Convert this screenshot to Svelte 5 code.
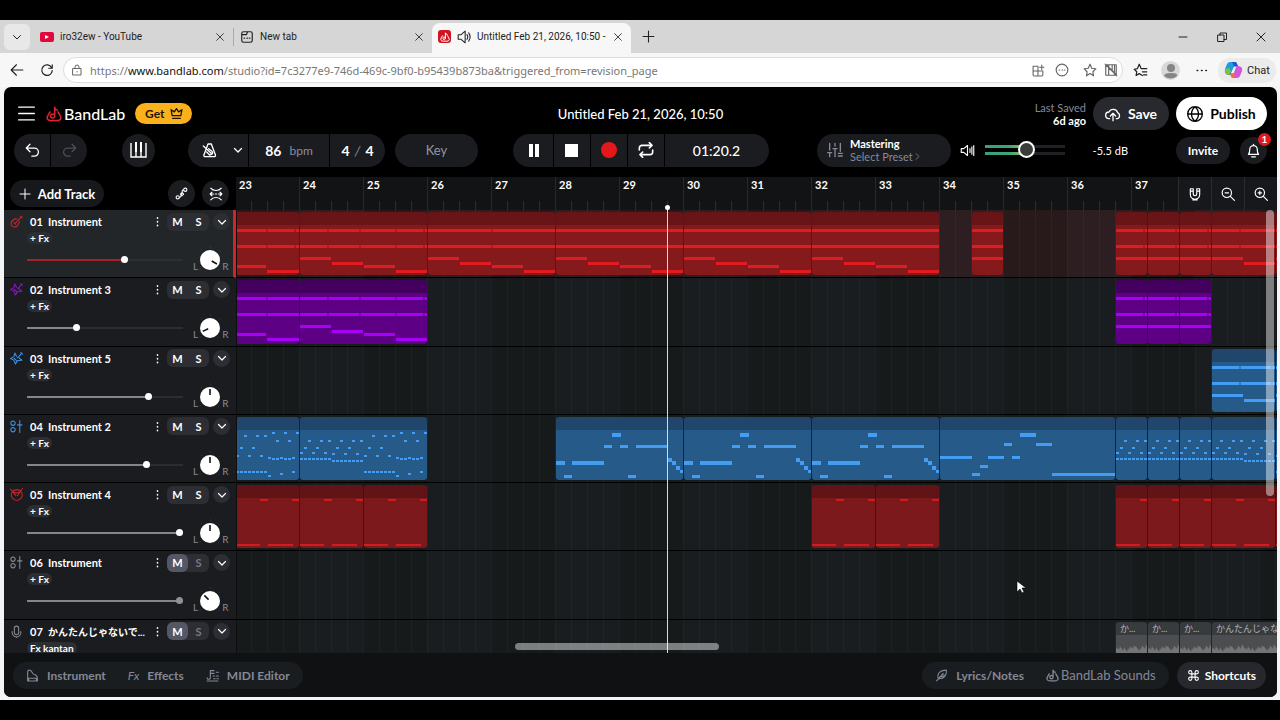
<script>
	const BAR = 64;
	const FIRST_BAR = 23;

	const bars = Array.from({ length: 15 }, (_, i) => FIRST_BAR + i);

	const icons = {
		chevron: 'M5 9l7 7 7-7',
		right: 'M8 4l8 8-8 8',
		close: 'M4 4l16 16M20 4L4 20',
		plus: 'M12 2v20M2 12h20',
		minus: 'M4 12h16',
		windows: 'M4 8h12v13H4zM8 8V4h13v13h-5',
		back: 'M22 12H2M11 3l-9 9 9 9',
		reload: 'M20 8a9 9 0 1 0 1 5M21 3v6h-6',
		lock: 'M4 9h16v13H4zM8 9V6a4 4 0 0 1 8 0v3M12 15v1',
		page: 'M3 6a3 3 0 0 1 3-3h12a3 3 0 0 1 3 3v12a3 3 0 0 1-3 3H6a3 3 0 0 1-3-3zM3 8h8l2-5M7 14h1M12 14h1M16 14h1',
		speaker: 'M2 8h5l7-6v20l-7-6H2zM17 8q3 4 0 8M20 5q5 7 0 14',
		apps: 'M2 4h9v18H4a2 2 0 0 1-2-2zM2 13h18v7a2 2 0 0 1-2 2h-7M18 2v8M14 6h8',
		bubble: 'M12 2a10 10 0 1 0 0 20 10 10 0 0 0 0-20M7 12h1M12 12h1M16 12h1',
		star: 'M12 2l3 7 7 1-5 5 1 7-6-4-6 4 1-7-5-5 7-1z',
		keysOff: 'M3 3h18v18H3zM8 3v18M14 3v9M18 3v18M2 2l20 20M4 3l17 17',
		starList: 'M15 20l-5-3-5 3 1-6-4-4 5-1 3-7 3 7h9M15 14h7M17 19h5',
		dots: 'M4 12h1M12 12h1M20 12h1',
		more: 'M12 4v1M12 12v1M12 20v1',
		menu: 'M1 3h22M1 12h22M1 21h22',
		crown: 'M4 16L2 5l6 4 4-6 4 6 6-4-2 11zM5 21h14',
		cloud: 'M7 19H6a5 5 0 0 1 0-10 7 7 0 0 1 13 1 5 5 0 0 1 0 9h-2M12 22V11M8 15l4-4 4 4',
		globe: 'M12 1a11 11 0 1 0 0 22 11 11 0 0 0 0-22M12 1c-7 6-7 16 0 22M12 1c7 6 7 16 0 22M1 12h22',
		undo: 'M8 2L2 8l6 6M2 8h13a6 6 0 0 1 0 13h-4',
		redo: 'M16 2l6 6-6 6M22 8H9a6 6 0 0 0 0 13h4',
		metronome: 'M9 3h5l6 16a2 2 0 0 1-2 3H5a2 2 0 0 1-2-3zM2 6l13 12M7 15l3 3a3 3 0 0 0 5-4l-5-4',
		loop: 'M2 12V9a4 4 0 0 1 4-4h15M17 1l4 4-4 4M22 12v3a4 4 0 0 1-4 4H3M7 15l-4 4 4 4',
		mixer: 'M4 2v10M1 16h6M4 16v6M12 2v4M9 10h6M12 10v12M20 2v12M17 17h6M17 21h6',
		volume: 'M2 9h4l6-5v16l-6-5H2zM16 9v6M19 6v12M22 4v16',
		bell: 'M4 18c2-2 2-4 2-8a6 6 0 0 1 12 0c0 4 0 6 2 8zM9 22h6M12 2v2',
		automation: 'M2 19a3 3 0 1 0 6 0 3 3 0 0 0-6 0M16 5a3 3 0 1 0 6 0 3 3 0 0 0-6 0M8 19c6 0 1-8 5-8M16 5c-5 0-1 7-4 8M13 10l3 3-3 3-3-3z',
		fit: 'M3 2q3 4 9 4t9-4M3 22q3-4 9-4t9 4M2 12h6M11 12h2M16 12h6M5 9l-3 3 3 3M19 9l3 3-3 3',
		magnet: 'M4 3h5v9a3 3 0 0 0 6 0V3h5v10a8 8 0 0 1-16 0zM4 7h5M15 7h5M8 22h8',
		zoomOut: 'M10 2a8 8 0 1 0 0 16 8 8 0 0 0 0-16M7 10h6M16 16l7 7',
		zoomIn: 'M10 2a8 8 0 1 0 0 16 8 8 0 0 0 0-16M7 10h6M10 7v6M16 16l7 7',
		guitar: 'M22 3l-8 8M19 2l3 3M12 7c-3-1-4 1-5 2-3 1-5 2-5 6s3 7 7 7 5-2 6-5c1-1 3-2 2-5M16 8l-6 7M7 14l3 3',
		electric: 'M22 2l-8 9M20 1l3 3M12 8L9 2 7 9l-6 3 6 3 3 7 4-6 8-1-5-4M8 12l4 4',
		machine: 'M5 2a4 4 0 1 0 1 0zM5 14a4 4 0 1 0 1 0zM18 1v22M14 9h8',
		drum: 'M12 3a10 10 0 1 0 1 0zM5 6c2 4 12 4 14 0M1 2l10 12M23 1l-7 10M14 14l2-4',
		mic: 'M8 6a4 4 0 0 1 8 0v8a4 4 0 0 1-8 0zM4 12v2a8 8 0 0 0 16 0v-2M12 22v2',
		piano: 'M3 22V5a3 3 0 0 1 3-3c6 0 5 8 9 8 4 1 6 3 6 7v5M3 17h18M5 17v5M19 17v5M3 22h18',
		midi: 'M2 16a3 3 0 1 0 6 0V3h7M8 8h7M2 22h20M19 6h4M13 13h3M19 13h4M14 18h3M20 18h3',
		quill: 'M3 22L15 8M6 18C3 8 10 2 21 2c1 10-4 17-15 16M9 14h7M12 11h6',
		command: 'M9 9V6a3 3 0 1 0-3 3h12a3 3 0 1 0-3-3v12a3 3 0 1 0 3-3H6a3 3 0 1 0 3 3z'
	};

	// notes are [x, y, width, height] inside a clip
	const steps = [
		[0, 45, 31, 3],
		[32, 50, 31, 3],
		[64, 53, 31, 3],
		[96, 58, 31, 3]
	];

	function chord(width) {
		return [[0, 17, width, 3], [0, 33, width, 3]];
	}

	function dots(rows, offset = 0) {
		return rows.map((y, i) => [offset + i * 4, y, 3, 2]);
	}

	const arpOne = [...dots([35, 30, 23, 35, 30, 23, 35, 23]), ...dots(Array(8).fill(41))];
	const arpTwo = [...dots([36, 30, 23, 36, 30, 23, 36, 23], 32), ...dots(Array(8).fill(43), 32)];
	const arpBar = [
		...dots([38, 30, 18, 38, 30, 18, 38, 18, 40, 15, 23, 40, 15, 23, 40, 15]),
		...dots(Array(8).fill(54)),
		[36, 41, 3, 2], [40, 41, 3, 2], [48, 41, 3, 2], [52, 41, 3, 2],
		[32, 58, 3, 2], [44, 56, 3, 2], [56, 54, 3, 2]
	];

	function shift(notes, dx) {
		return notes.map(([x, y, w, h]) => [x + dx, y, w, h]);
	}

	const melody = [
		[0, 44, 9, 4], [8, 58, 8, 3], [16, 44, 32, 4], [48, 28, 8, 3], [56, 16, 9, 4],
		[64, 28, 8, 3], [72, 58, 8, 3], [80, 28, 32, 3], [112, 41, 4, 4], [116, 44, 4, 4],
		[120, 49, 4, 4], [124, 53, 3, 3]
	];
	const ending = [
		[0, 39, 32, 3], [32, 56, 8, 3], [40, 48, 8, 3], [48, 39, 16, 3], [64, 26, 8, 3],
		[72, 39, 8, 3], [80, 16, 16, 4], [96, 26, 16, 3], [112, 56, 64, 3]
	];
	const beat = [[24, 14, 8, 2], [56, 14, 7, 2], [0, 59, 24, 2], [32, 59, 25, 2]];

	const lead = [...chord(128), ...steps];
	const tail = [...chord(64), [0, 53, 30, 3], [31, 58, 32, 3]];
	const half = [...chord(32), [0, 45, 32, 3]];
	const opening = [...chord(64), [0, 45, 31, 3], [32, 50, 32, 3]];

	function clip(start, length, notes, cuts = []) {
		return { start, length, notes, cuts };
	}

	let tracks = [
		{
			name: 'Instrument', icon: 'guitar', tint: '#c4232b', color: 'red', volume: 63, pan: 30, selected: true,
			clips: [
				clip(23, 1, tail, [31, 59]),
				clip(24, 2, lead, [28, 60, 96, 124]),
				clip(26, 2, lead, [64]),
				clip(28, 2, lead), clip(30, 2, lead), clip(32, 2, lead),
				clip(34.5, 0.5, half),
				clip(36.75, 0.5, half, [28]), clip(37.25, 0.5, half, [28]), clip(37.75, 0.5, half, [28]),
				clip(38.25, 1, opening, [28, 60]),
				clip(39.25, 1, lead)
			]
		},
		{
			name: 'Instrument 3', icon: 'electric', tint: '#8a14c8', color: 'purple', volume: 31, pan: 155,
			clips: [
				clip(23, 1, tail, [31]), clip(24, 2, lead, [28, 60, 96, 124]),
				clip(36.75, 0.5, half, [28]), clip(37.25, 0.5, half, [28]), clip(37.75, 0.5, half, [28])
			]
		},
		{
			name: 'Instrument 5', icon: 'electric', tint: '#3f8fdd', color: 'blue', volume: 79, pan: -90,
			clips: [clip(38.25, 1, opening, [28, 60]), clip(39.25, 1, lead)]
		},
		{
			name: 'Instrument 2', icon: 'machine', tint: '#3f8fdd', color: 'blue', volume: 78, pan: -90,
			clips: [
				clip(23, 1, arpBar),
				clip(24, 2, [...arpOne, ...arpTwo, ...shift(arpBar, 64)]),
				clip(28, 2, melody), clip(30, 2, melody), clip(32, 2, melody),
				clip(34, 2.75, ending),
				clip(36.75, 0.5, arpOne), clip(37.25, 0.5, arpOne), clip(37.75, 0.5, arpOne),
				clip(38.25, 1, [...arpOne, ...arpTwo]),
				clip(39.25, 1, arpBar)
			]
		},
		{
			name: 'Instrument 4', icon: 'drum', tint: '#c4232b', color: 'crimson', volume: 100, pan: -90,
			clips: [
				clip(23, 1, beat), clip(24, 1, beat), clip(25, 1, beat),
				clip(32, 1, beat), clip(33, 1, beat),
				clip(36.75, 0.5, beat), clip(37.25, 0.5, beat), clip(37.75, 0.5, beat),
				clip(38.25, 1, beat), clip(39.25, 1, beat)
			]
		},
		{ name: 'Instrument', icon: 'machine', tint: '#85878d', color: 'grey', volume: 100, pan: -135, muted: true, clips: [] },
		{
			name: 'かんたんじゃないで...', small: true, icon: 'mic', tint: '#85878d', color: 'grey', volume: 80, pan: -90, muted: true, fx: 'Fx kantan',
			clips: [
				{ ...clip(36.75, 0.5, []), label: 'か...' },
				{ ...clip(37.25, 0.5, []), label: 'か...' },
				{ ...clip(37.75, 0.5, []), label: 'か...' },
				{ ...clip(38.25, 2, []), label: 'かんたんじゃない' }
			]
		}
	];

	const levels = [5, 4, 6, 3, 5, 2, 4, 6, 5, 7, 6, 3, 4, 7, 5, 8];

	function wave(width) {
		let d = 'M0 34';
		for (let x = 0; x < width; x += 2) {
			const y = 30 - levels[(x / 2) % levels.length];
			d += `L${x} ${y}L${x + 1} ${y + 2}`;
		}
		return d + `L${width} 34Z`;
	}

	let master = 52;
</script>

{#snippet icon(name, size, weight = 2)}
	<svg class="icon" width={size} height={size} viewBox="0 0 24 24" stroke-width={weight} aria-hidden="true"><path d={icons[name]} /></svg>
{/snippet}

{#snippet logo(size)}
	<svg class="icon" width={size} height={size} viewBox="0 0 24 24" stroke-width="2.4" aria-hidden="true">
		<path d="M6 9l-3 5c-3 5 0 8 4 8h10c4 0 7-3 4-8l-3-5M13 15V2q1 4 4 4M13 15a3 3 0 1 0-3 3 3 3 0 0 0 3-3" />
	</svg>
{/snippet}

<div class="page">
	<div class="browser">
		<div class="tabs">
			<button class="tab-menu" aria-label="Tab list">{@render icon('chevron', 12)}</button>
			<div class="tab">
				<svg width="14" height="10" viewBox="0 0 14 10" aria-hidden="true"><rect width="14" height="10" rx="2" fill="#e1073c" /><path d="M5 3v4l4-2z" fill="#fff" /></svg>
				<span class="tab-title">iro32ew - YouTube</span>
				<button aria-label="Close tab">{@render icon('close', 10)}</button>
			</div>
			<div class="tab divided">
				{@render icon('page', 14)}
				<span class="tab-title">New tab</span>
				<button aria-label="Close tab">{@render icon('close', 10)}</button>
			</div>
			<div class="tab current">
				<span class="favicon">{@render logo(10)}</span>
				{@render icon('speaker', 14, 1.8)}
				<span class="tab-title">Untitled Feb 21, 2026, 10:50 -</span>
				<button aria-label="Close tab">{@render icon('close', 10)}</button>
			</div>
			<button class="new-tab" aria-label="New tab">{@render icon('plus', 13)}</button>
			<div class="window">
				<button aria-label="Minimize">{@render icon('minus', 12)}</button>
				<button aria-label="Restore">{@render icon('windows', 12)}</button>
				<button aria-label="Close">{@render icon('close', 12)}</button>
			</div>
		</div>
		<div class="toolbar">
			<button aria-label="Back">{@render icon('back', 14)}</button>
			<button aria-label="Reload">{@render icon('reload', 14)}</button>
			<div class="address">
				{@render icon('lock', 12)}
				<span class="url">https://<b>www.bandlab.com</b>/studio?id=7c3277e9-746d-469c-9bf0-b95439b873ba&amp;triggered_from=revision_page</span>
				<button aria-label="Apps">{@render icon('apps', 13)}</button>
				<button aria-label="Comments">{@render icon('bubble', 14)}</button>
				<button class="split" aria-label="Favorite">{@render icon('star', 14)}</button>
				<button class="midi" aria-label="MIDI blocked">{@render icon('keysOff', 14)}</button>
			</div>
			<button aria-label="Favorites">{@render icon('starList', 15)}</button>
			<span class="avatar"><svg width="19" height="19" viewBox="0 0 19 19" aria-hidden="true"><circle cx="10" cy="7" r="4" fill="#858585" /><path d="M3 15q0-3 7-3t6 3q-6 5-13 0" fill="#858585" /></svg></span>
			<button aria-label="More">{@render icon('dots', 13, 3)}</button>
			<button class="chat">
				<svg width="19" height="18" viewBox="0 0 19 18" aria-hidden="true">
					<path d="M6 1h6l2 4-4 1-3 8H4q-4-1-3-6l2-5q1-2 3-2" fill="#1f9be0" />
					<path d="M1 8l4-1 2 3-2 4q-4 0-4-6" fill="#76c442" />
					<path d="M13 17H8l-2-4 4-1 2-7h3q4 1 3 5l-2 5q-1 2-3 2" fill="#d355d8" />
					<path d="M6 13l3-1 2 2-1 3H8z" fill="#f2733a" />
					<path d="M8 1h4l2 4h-4z" fill="#2356c9" />
					<path d="M10 6h2l-3 6H7z" fill="#f4f4f4" />
				</svg>
				Chat
			</button>
		</div>

		<div class="studio">
			<header>
				<div class="brand">
					<button aria-label="Menu">{@render icon('menu', 17)}</button>
					<a class="bandlab" href="/"><span class="flame">{@render logo(16)}</span>BandLab</a>
					<button class="get">Get {@render icon('crown', 13, 2.4)}</button>
				</div>
				<h1>Untitled Feb 21, 2026, 10:50</h1>
				<div class="account">
					<div class="saved"><span>Last Saved</span><b>6d ago</b></div>
					<button class="save">{@render icon('cloud', 16)} Save</button>
					<button class="publish">{@render icon('globe', 16)} Publish</button>
				</div>
			</header>

			<div class="controls">
				<div class="left">
					<div class="pill">
						<button class="w36" aria-label="Undo">{@render icon('undo', 15)}</button>
						<button class="w36 dim" aria-label="Redo">{@render icon('redo', 15)}</button>
					</div>
					<button class="keys" aria-label="Keyboard">
						<svg width="17" height="16" viewBox="0 0 17 16" aria-hidden="true"><path d="M1 1v14h15V1M6 9v6M11 9v6" fill="none" stroke="#fff" stroke-width="1.4" /><path d="M5 0h2v10H5zM10 0h2v10h-2z" fill="#fff" /></svg>
					</button>
					<div class="pill">
						<div class="metro">
							<button aria-label="Metronome">{@render icon('metronome', 16)}</button>
							<button aria-label="Metronome options">{@render icon('chevron', 12, 2.6)}</button>
						</div>
						<button class="tempo">86 <small>bpm</small></button>
						<button class="meter">4 <i>/</i> 4</button>
					</div>
					<button class="key">Key</button>
				</div>
				<div class="pill">
					<button class="w40" aria-label="Pause"><svg width="12" height="13" viewBox="0 0 12 13" fill="#fff" aria-hidden="true"><path d="M1 0h4v13H1zM7 0h4v13H7z" /></svg></button>
					<button class="w36" aria-label="Stop"><svg width="13" height="13" aria-hidden="true"><rect width="13" height="13" fill="#fff" /></svg></button>
					<button class="w36" aria-label="Record"><svg width="16" height="16" aria-hidden="true"><circle cx="8" cy="8" r="8" fill="#e2181c" /></svg></button>
					<button class="w36" aria-label="Loop">{@render icon('loop', 16, 2.4)}</button>
					<button class="time">01:20.2</button>
				</div>
				<div class="right">
					<button class="mastering">
						{@render icon('mixer', 16)}
						<span><b>Mastering</b><span class="preset">Select Preset {@render icon('right', 9)}</span></span>
					</button>
					<span class="vol">{@render icon('volume', 15, 1.8)}</span>
					<input class="master" type="range" aria-label="Master volume" bind:value={master} style="--v: {master}%" />
					<span class="db">-5.5 dB</span>
					<button class="invite">Invite</button>
					<button class="bell" aria-label="Notifications">{@render icon('bell', 15)}<span class="badge">1</span></button>
				</div>
			</div>

			<div class="top">
				<div class="panel-tools">
					<button class="add">{@render icon('plus', 12)} Add Track</button>
					<button class="round" aria-label="Automation">{@render icon('automation', 13)}</button>
					<button class="round" aria-label="Fit">{@render icon('fit', 14)}</button>
				</div>
				<div class="ruler">
					{#each bars as bar}
						<span>{bar}</span>
					{/each}
				</div>
				<div class="zoom">
					<button aria-label="Snap">{@render icon('magnet', 14)}</button>
					<button aria-label="Zoom out">{@render icon('zoomOut', 14)}</button>
					<button aria-label="Zoom in">{@render icon('zoomIn', 14)}</button>
				</div>
			</div>

			<div class="workspace">
				<div class="scroller">
					<div class="tracks">
						{#each tracks as track, i}
							<div class="track" class:selected={track.selected}>
								<div class="head">
									<span class="kind" style="color: {track.tint}">{@render icon(track.icon, 13, 2)}</span>
									<b class="num">0{i + 1}</b>
									<b class="name" class:small={track.small}>{track.name}</b>
									<button class="more" aria-label="Track options">{@render icon('more', 11, 3.4)}</button>
									<div class="ms">
										<button class:on={track.muted}>M</button>
										<button class:off={track.muted}>S</button>
									</div>
									<button class="fold" aria-label="Expand track">{@render icon('chevron', 12, 2.4)}</button>
								</div>
								<button class="fx">{track.fx ?? '+ Fx'}</button>
								<div class="mix">
									<input
										type="range"
										aria-label="Volume"
										class:muted={track.muted}
										bind:value={track.volume}
										style="--v: {track.volume}%"
									/>
									<span>L</span>
									<svg width="24" height="28" viewBox="-12 -16 24 28" aria-hidden="true">
										<circle r="13" fill="none" stroke="#50535a" stroke-dasharray="1 10" pathLength="88" transform="rotate(-180)" />
										<circle r="10" fill="#fff" />
										<path d="M2 0h6" stroke="#111" stroke-width="1.6" transform="rotate({track.pan})" />
									</svg>
									<span>R</span>
								</div>
							</div>
							<div class="lane {track.color}" class:selected={track.selected}>
								{#each track.clips as c}
									<div class="clip" style="left: {(c.start - FIRST_BAR) * BAR - 1}px; width: {c.length * BAR - 1}px">
										{#if c.label}<span class="label">{c.label}</span>{/if}
										<svg class="notes" aria-hidden="true">
											{#each c.notes as [x, y, w, h]}
												<rect {x} {y} width={w} height={h} />
											{/each}
											{#each c.cuts as x}
												<path class="cut" d="M{x} 17v3M{x} 33v3" />
											{/each}
											{#if c.label}<path class="wave" d={wave(c.length * BAR)} />{/if}
										</svg>
									</div>
								{/each}
							</div>
						{/each}
					</div>
				</div>
				<div class="playhead"></div>
				<div class="hbar"></div>
				<div class="vbar"></div>
				<svg class="pointer" width="10" height="14" viewBox="0 0 10 14" aria-hidden="true"><path d="M1 1v11l3-3 2 4 2-1-2-4h4z" fill="#fff" stroke="#000" stroke-width=".6" /></svg>
			</div>

			<footer>
				<div class="dock">
					<button>{@render icon('piano', 13)} Instrument</button>
					<button><i>Fx</i> Effects</button>
					<button>{@render icon('midi', 13)} MIDI Editor</button>
				</div>
				<div class="dock end">
					<button>{@render icon('quill', 13)} Lyrics/Notes</button>
					<button class="sounds">{@render logo(13)} BandLab Sounds</button>
				</div>
				<button class="shortcuts">{@render icon('command', 13)} Shortcuts</button>
			</footer>
		</div>
	</div>
</div>

<style>
	:global(body) {
		margin: 0;
		background: #000;
	}
	.page {
		box-sizing: border-box;
		height: 100vh;
		padding: 20px 0;
		font-family: Lato, "Noto Sans CJK JP", sans-serif;
		font-size: 13px;
		color: #fff;
	}
	.page * {
		box-sizing: border-box;
	}
	button {
		display: flex;
		align-items: center;
		justify-content: center;
		padding: 0;
		border: 0;
		background: none;
		color: inherit;
		font: inherit;
		white-space: nowrap;
		cursor: pointer;
	}
	svg {
		display: block;
		flex: none;
	}
	.icon {
		fill: none;
		stroke: currentColor;
		stroke-linecap: round;
		stroke-linejoin: round;
	}
	.browser {
		display: flex;
		flex-direction: column;
		height: 100%;
		background: #f3f4f6;
		color: #222;
	}

	/* browser tabs */
	.tabs {
		display: flex;
		align-items: center;
		height: 33px;
		background: #d6d6d6;
		font: 10px Roboto, "Open Sans", sans-serif;
	}
	.tab-menu {
		width: 26px;
		height: 26px;
		margin-left: 4px;
		border-radius: 6px;
		background: #e8e8e8;
	}
	.tab {
		display: flex;
		align-items: center;
		gap: 6px;
		width: 203px;
		height: 18px;
		padding: 0 8px 0 10px;
	}
	.tab.divided {
		width: 199px;
		padding-left: 6px;
		border-left: 1px solid #aaa;
	}
	.tab.current {
		width: 199px;
		height: 30px;
		align-self: flex-end;
		padding: 0 8px 3px 6px;
		border-radius: 8px 8px 0 0;
		background: #f7f7f7;
	}
	.tab-title {
		flex: 1;
		white-space: nowrap;
	}
	.favicon {
		display: grid;
		flex: none;
		place-items: center;
		width: 13px;
		height: 13px;
		border-radius: 3px;
		background: #cf1520;
		color: #fff;
	}
	.new-tab {
		width: 34px;
		height: 26px;
	}
	.window {
		display: flex;
		margin-left: auto;
	}
	.window button {
		width: 39px;
		height: 30px;
	}
	.toolbar {
		display: flex;
		align-items: center;
		height: 34px;
		background: #f7f7f7;
		font: 11px "Noto Sans", "Open Sans", sans-serif;
	}
	.toolbar > button {
		width: 30px;
	}
	.toolbar > button:first-child {
		margin-left: 2px;
	}
	.address {
		display: flex;
		align-items: center;
		flex: 1;
		height: 26px;
		margin: 0 2px 0 1px;
		padding: 0 2px 0 7px;
		border: 1px solid #ddd;
		border-radius: 13px;
		background: #fff;
		color: #666;
	}
	.address button {
		width: 24px;
	}
	.address .split {
		margin-left: 4px;
	}
	.address .midi {
		width: 18px;
	}
	.url {
		flex: 1;
		margin-left: 7px;
		color: #777;
	}
	.url b {
		font-weight: 400;
		color: #111;
	}
	.avatar {
		border-radius: 50%;
		background: #d8d8d8;
	}
	.toolbar > .avatar {
		margin: 0 6px;
	}
	.toolbar > .chat {
		gap: 4px;
		width: 58px;
		height: 25px;
		margin: 0 4px 0 2px;
		border-radius: 12px;
		background: #ebebeb;
		font-family: Roboto, sans-serif;
	}

	/* studio header */
	.studio {
		display: flex;
		flex-direction: column;
		flex: 1;
		min-height: 0;
		margin: 0 3px 3px 4px;
		overflow: hidden;
		border-radius: 7px;
		background: #000;
		color: #fff;
	}
	header,
	.controls {
		display: grid;
		grid-template-columns: 1fr auto 1fr;
		align-items: center;
		padding: 0 10px;
	}
	header {
		height: 46px;
		padding-top: 7px;
	}
	h1 {
		margin: 0;
		font-size: 13px;
		font-weight: 500;
	}
	.brand,
	.account,
	.left,
	.right {
		display: flex;
		align-items: center;
	}
	.brand {
		padding-left: 4px;
	}
	.bandlab {
		display: flex;
		align-items: center;
		gap: 2px;
		margin: 0 10px 0 11px;
		color: #fff;
		font-size: 16px;
		font-weight: 500;
		text-decoration: none;
	}
	.flame {
		color: #d8232a;
	}
	.get {
		gap: 5px;
		width: 57px;
		height: 21px;
		border-radius: 11px;
		background: #fbb11c;
		color: #1d1505;
		font-size: 12px;
		font-weight: 700;
	}
	.account,
	.right {
		justify-content: flex-end;
	}
	.saved {
		display: flex;
		flex-direction: column;
		align-items: flex-end;
		margin-right: 7px;
		font-size: 11px;
		line-height: 13px;
	}
	.saved span {
		color: #868999;
	}
	.save,
	.publish {
		gap: 7px;
		width: 76px;
		height: 33px;
		border-radius: 17px;
		background: #27292e;
		font-size: 14px;
		font-weight: 700;
	}
	.publish {
		width: 91px;
		margin-left: 7px;
		background: #fff;
		color: #000;
	}
	.controls {
		height: 34px;
	}
	.pill {
		display: flex;
		gap: 1px;
		height: 33px;
		overflow: hidden;
		border-radius: 17px;
	}
	.pill > * {
		height: 33px;
		background: #1a1c20;
	}
	.w36 {
		width: 36px;
	}
	.w40 {
		width: 40px;
		padding-left: 2px;
	}
	.dim {
		color: #4c4f57;
	}
	.keys {
		width: 33px;
		height: 33px;
		margin: 0 33px 0 35px;
		border-radius: 50%;
		background: #1a1c20;
	}
	.metro {
		display: flex;
		align-items: center;
		gap: 14px;
		width: 60px;
		padding-left: 14px;
	}
	.tempo {
		gap: 8px;
		width: 80px;
		font-size: 14px;
		font-weight: 700;
	}
	.tempo small {
		color: #8a8da0;
		font-size: 12px;
		font-weight: 400;
	}
	.meter {
		gap: 5px;
		width: 55px;
		font-size: 14px;
		font-weight: 700;
	}
	.meter i {
		color: #8a8da0;
		font-weight: 400;
	}
	.key {
		width: 83px;
		height: 33px;
		margin-left: 10px;
		border-radius: 17px;
		background: #1a1c20;
		color: #9396a8;
		font-size: 13px;
	}
	.time {
		width: 104px;
		font-size: 14px;
		font-weight: 500;
	}
	.mastering {
		gap: 7px;
		justify-content: flex-start;
		width: 134px;
		height: 33px;
		padding-left: 10px;
		border-radius: 17px;
		background: #1a1c20;
		color: #868999;
		font-size: 11px;
		line-height: 13px;
		text-align: left;
	}
	.mastering b {
		display: block;
		color: #fff;
	}
	.preset {
		display: flex;
		align-items: center;
	}
	.vol {
		margin: 0 10px 0 9px;
	}
	input[type='range'] {
		appearance: none;
		margin: 0;
		background: none;
	}
	.master {
		width: 80px;
		height: 18px;
	}
	.master::-webkit-slider-runnable-track {
		height: 10px;
		background:
			linear-gradient(90deg, #38a07c, #3fa67a 30%, #8ec24a var(--v), #1f2124 var(--v)) 0 0 / 100% 3px no-repeat,
			linear-gradient(90deg, #38a07c, #3fa67a 30%, #8ec24a var(--v), #1f2124 var(--v)) 0 100% / 100% 3px no-repeat;
	}
	.master::-webkit-slider-thumb {
		appearance: none;
		width: 17px;
		height: 17px;
		margin-top: -4px;
		border: 2px solid #fff;
		border-radius: 50%;
		background: #3b3d3b;
	}
	.db {
		width: 63px;
		margin-right: 48px;
		font-size: 11px;
		text-align: right;
		white-space: nowrap;
	}
	.invite {
		width: 54px;
		height: 27px;
		border-radius: 14px;
		background: #1a1c20;
		font-size: 12px;
		font-weight: 700;
	}
	.bell {
		position: relative;
		width: 27px;
		height: 27px;
		margin-left: 10px;
		border-radius: 50%;
		background: #1a1c20;
	}
	.badge {
		position: absolute;
		top: -4px;
		right: -4px;
		width: 13px;
		height: 13px;
		border-radius: 50%;
		background: #e2181c;
		font-size: 10px;
		font-weight: 700;
		line-height: 13px;
	}

	/* ruler row */
	.top {
		display: flex;
		height: 33px;
		margin-top: 10px;
	}
	.panel-tools {
		display: flex;
		align-items: center;
		width: 232px;
		padding-left: 6px;
	}
	.add {
		gap: 7px;
		width: 94px;
		height: 27px;
		margin-right: auto;
		border-radius: 14px;
		background: #16181b;
		font-weight: 700;
	}
	.round {
		width: 27px;
		height: 27px;
		margin-right: 7px;
		border-radius: 50%;
		background: #1a1c20;
	}
	.ruler {
		display: flex;
		flex: 1;
		min-width: 0;
		overflow: hidden;
		background:
			linear-gradient(#111315 0 0) 0 0 / 100% 24px no-repeat,
			repeating-linear-gradient(90deg, #2b2e31 0 1px, #111315 1px 16px) -1px 0;
		background-size: 100% 24px, 1536px 100%;
	}
	.ruler span {
		flex: none;
		width: 64px;
		padding: 1px 0 0 3px;
		border-left: 1px solid #26292c;
		font-size: 11px;
		font-weight: 700;
	}
	.ruler span:first-child {
		width: 63px;
		border: 0;
	}
	.zoom {
		display: flex;
		background: #16181b;
	}
	.zoom button {
		width: 33px;
		border-left: 1px solid #2a2c30;
	}

	/* tracks and lanes */
	.workspace {
		position: relative;
		flex: 1;
		min-height: 0;
	}
	.scroller {
		height: 100%;
		overflow: hidden;
	}
	.tracks {
		display: grid;
		grid-template-columns: 232px 1fr;
		grid-auto-rows: 1fr;
		height: 478px;
	}
	.track {
		min-width: 0;
		padding: 1px 6px 0 6px;
		border-bottom: 1px solid #000;
		background: #1a1c1f;
	}
	.track.selected {
		border-right: 3px solid #d3222a;
		padding-right: 3px;
		background: #222629;
	}
	.head {
		display: flex;
		align-items: center;
		height: 21px;
		font-size: 11px;
	}
	.kind {
		width: 20px;
	}
	.num {
		width: 18px;
	}
	.name {
		flex: 1;
		white-space: nowrap;
	}
	.name.small {
		font-size: 10px;
	}
	.more {
		width: 20px;
	}
	.ms {
		display: flex;
		height: 18px;
		border-radius: 6px;
		background: #2c2e34;
		font-weight: 700;
	}
	.ms button {
		width: 21px;
		border-radius: 6px;
	}
	.ms .on {
		background: #555864;
	}
	.ms .off {
		color: #777a88;
	}
	.fold {
		width: 17px;
		height: 17px;
		margin-left: 4px;
		border-radius: 50%;
		background: #2c2e34;
	}
	.fx {
		height: 12px;
		margin-left: 17px;
		padding: 0 3px;
		border-radius: 6px;
		background: #2b2e32;
		font-size: 10px;
		font-weight: 700;
		line-height: 12px;
	}
	.mix {
		display: flex;
		align-items: center;
		padding-left: 17px;
		color: #878a90;
		font-size: 10px;
	}
	.mix span {
		padding-top: 16px;
		line-height: 12px;
	}
	.mix input {
		width: 156px;
		height: 8px;
		margin: 4px 10px 0 0;
		flex: none;
	}
	.mix input::-webkit-slider-runnable-track {
		height: 2px;
		background: linear-gradient(90deg, #84868c var(--v), #2b2d31 var(--v));
	}
	.selected .mix input::-webkit-slider-runnable-track {
		background: linear-gradient(90deg, #a8222b var(--v), #2d3033 var(--v));
	}
	.mix input::-webkit-slider-thumb {
		appearance: none;
		width: 7px;
		height: 7px;
		margin-top: -3px;
		border-radius: 50%;
		background: #fff;
	}
	.mix input.muted::-webkit-slider-thumb {
		background: #909197;
	}
	.lane {
		position: relative;
		overflow: hidden;
		border-bottom: 1px solid #000;
		border-left: 1px solid #0c0e0f;
		background:
			repeating-linear-gradient(90deg, #ffffff08 0 1px, transparent 1px 16px) -2px 0,
			repeating-linear-gradient(90deg, #161a1b 0 64px, #191d1f 64px 128px) -2px 0;
		background-size: 1536px 100%;
	}
	.lane.selected {
		background:
			repeating-linear-gradient(90deg, #ffffff08 0 1px, transparent 1px 16px) -2px 0,
			repeating-linear-gradient(90deg, #28191b 0 64px, #2d1e21 64px 128px) -2px 0;
		background-size: 1536px 100%;
	}
	.clip {
		position: absolute;
		top: 2px;
		bottom: 2px;
		overflow: hidden;
		border-radius: 3px;
		background: linear-gradient(var(--cap) 13px, var(--body) 13px);
	}
	.notes {
		width: 100%;
		height: 100%;
		fill: var(--note);
	}
	.cut {
		stroke: var(--body);
	}
	.red {
		--cap: #691518;
		--body: #85191c;
		--note: #df1d20;
	}
	.crimson {
		--cap: #611416;
		--body: #7c191c;
		--note: #cf1d20;
	}
	.purple {
		--cap: #44005f;
		--body: #5e0086;
		--note: #a700f5;
	}
	.blue {
		--cap: #20466c;
		--body: #265a89;
		--note: #439df2;
	}
	.grey {
		--cap: #383b3d;
		--body: #4b4d4f;
		--note: #737577;
	}
	.label {
		position: absolute;
		left: 4px;
		color: #b4b6b8;
		font-size: 9px;
		line-height: 13px;
		white-space: nowrap;
	}
	.playhead {
		position: absolute;
		top: 0;
		bottom: 0;
		left: 663px;
		width: 1px;
		background: #d9dada;
	}
	.playhead::before {
		content: '';
		position: absolute;
		top: -5px;
		left: -2px;
		width: 5px;
		height: 5px;
		border-radius: 50%;
		background: #fff;
	}
	.hbar,
	.vbar {
		position: absolute;
		border-radius: 4px;
		background: #ffffff70;
	}
	.hbar {
		bottom: 3px;
		left: 511px;
		width: 204px;
		height: 7px;
	}
	.vbar {
		top: 0;
		right: 3px;
		width: 8px;
		height: 286px;
	}
	.pointer {
		position: absolute;
		top: 370px;
		left: 1012px;
	}

	/* bottom dock */
	footer {
		display: flex;
		align-items: center;
		height: 44px;
		padding: 0 11px 0 9px;
		background: #0f1113;
		color: #848896;
		font-size: 12px;
		font-weight: 700;
	}
	.dock {
		display: flex;
		gap: 22px;
		height: 27px;
		padding: 0 13px;
		border-radius: 14px;
		background: #1a1d20;
	}
	.dock button {
		gap: 8px;
	}
	.dock i {
		font-weight: 400;
	}
	.end {
		margin-left: auto;
	}
	.dock .sounds {
		gap: 2px;
		font-size: 13px;
		font-weight: 400;
	}
	.shortcuts {
		gap: 5px;
		height: 27px;
		margin-left: 8px;
		padding: 0 10px;
		border-radius: 14px;
		background: #26282d;
		color: #fff;
		font-weight: 700;
	}
</style>
